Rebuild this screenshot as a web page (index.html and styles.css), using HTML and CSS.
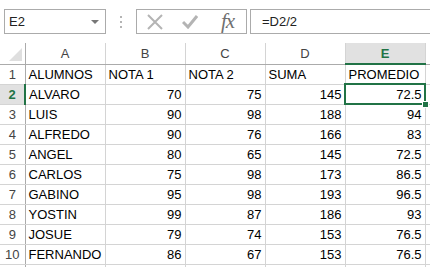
FILE: index.html
```html
<!DOCTYPE html>
<html>
    <head>
        <title>Hoja de cálculo</title>
        <link rel="stylesheet" href="styles.css">
    </head>
    <body>
        <div class="formula-bar">
            <div class="name-box">
                <span>E2</span>
                <span class="name-arrow"></span>
            </div>
            <div class="grip">
                <span></span><span></span><span></span>
            </div>
            <div class="fx-tools">
                <svg class="tool" width="18" height="16" viewBox="0 0 18 16">
                    <path d="M2 1 L16 15 M16 1 L2 15" stroke="#b4b4b4" stroke-width="2" fill="none"/>
                </svg>
                <svg class="tool" width="16" height="14" viewBox="0 0 16 14">
                    <path d="M1 7 L6 12 L15 1" stroke="#b4b4b4" stroke-width="3" fill="none"/>
                </svg>
                <span class="fx">fx</span>
            </div>
            <div class="formula-input">=D2/2</div>
        </div>
        <table class="sheet">
            <colgroup>
                <col class="c-head"><col class="c-cell"><col class="c-cell"><col class="c-cell"><col class="c-cell"><col class="c-cell"><col class="c-rest">
            </colgroup>
            <tr class="col-heads">
                <th class="corner"><span class="corner-tri"></span></th>
                <th>A</th><th>B</th><th>C</th><th>D</th><th class="sel">E</th><th class="rest"></th>
            </tr>
            <tr><th>1</th><td>ALUMNOS</td><td>NOTA 1</td><td>NOTA 2</td><td>SUMA</td><td>PROMEDIO</td><td></td></tr>
            <tr><th class="sel">2</th><td>ALVARO</td><td class="n">70</td><td class="n">75</td><td class="n">145</td><td class="n active">72.5<span class="handle"></span></td><td></td></tr>
            <tr><th>3</th><td>LUIS</td><td class="n">90</td><td class="n">98</td><td class="n">188</td><td class="n">94</td><td></td></tr>
            <tr><th>4</th><td>ALFREDO</td><td class="n">90</td><td class="n">76</td><td class="n">166</td><td class="n">83</td><td></td></tr>
            <tr><th>5</th><td>ANGEL</td><td class="n">80</td><td class="n">65</td><td class="n">145</td><td class="n">72.5</td><td></td></tr>
            <tr><th>6</th><td>CARLOS</td><td class="n">75</td><td class="n">98</td><td class="n">173</td><td class="n">86.5</td><td></td></tr>
            <tr><th>7</th><td>GABINO</td><td class="n">95</td><td class="n">98</td><td class="n">193</td><td class="n">96.5</td><td></td></tr>
            <tr><th>8</th><td>YOSTIN</td><td class="n">99</td><td class="n">87</td><td class="n">186</td><td class="n">93</td><td></td></tr>
            <tr><th>9</th><td>JOSUE</td><td class="n">79</td><td class="n">74</td><td class="n">153</td><td class="n">76.5</td><td></td></tr>
            <tr><th>10</th><td>FERNANDO</td><td class="n">86</td><td class="n">67</td><td class="n">153</td><td class="n">76.5</td><td></td></tr>
            <tr><th></th><td></td><td></td><td></td><td></td><td></td><td></td></tr>
        </table>
    </body>
</html>
```

FILE: styles.css
```css
body {
    margin: 0;
    padding: 0;
    background-color: #fff;
    font-family: "Liberation Sans", Arial, sans-serif;
    color: #000;
    overflow: hidden;
}
.formula-bar {
    display: flex;
    align-items: center;
    height: 25px;
    padding: 9px 0 9px 4px;
}
.name-box {
    display: flex;
    align-items: center;
    justify-content: space-between;
    padding: 0 6px 0 4px;
    box-sizing: border-box;
    width: 102px;
    height: 25px;
    border: 1px solid #ababab;
    font-size: 13px;
    color: #222;
}
.name-arrow {
    width: 0;
    height: 0;
    border-left: 4px solid transparent;
    border-right: 4px solid transparent;
    border-top: 4px solid #777;
}
.grip {
    width: 30px;
    display: flex;
    flex-direction: column;
    align-items: center;
    gap: 3px;
}
.grip span {
    width: 2px;
    height: 2px;
    background-color: #b4b4b4;
}
.fx-tools {
    width: 111px;
    height: 25px;
    box-sizing: border-box;
    border: 1px solid #ababab;
    display: flex;
    align-items: center;
    padding-left: 9px;
}
.tool {
    display: block;
}
.fx-tools svg:first-child {
    margin-right: 18px;
}
.fx-tools svg:nth-child(2) {
    margin-right: 23px;
}
.fx {
    font-family: "Liberation Serif", "Times New Roman", serif;
    font-style: italic;
    font-size: 21px;
    color: #707070;
    line-height: 1;
    letter-spacing: -1px;
}
.formula-input {
    flex: 1;
    height: 25px;
    box-sizing: border-box;
    border: 1px solid #ababab;
    border-right: none;
    margin-left: 3px;
    padding-left: 11px;
    font-size: 13px;
    line-height: 23px;
    color: #222;
}
.sheet {
    border-collapse: collapse;
    table-layout: fixed;
    width: 445px;
    font-size: 13px;
}
.c-head {
    width: 25px;
}
.c-cell {
    width: 80px;
}
.c-rest {
    width: 20px;
}
.sheet th, .sheet td {
    height: 20px;
    padding: 0 3px;
    box-sizing: border-box;
    border: 1px solid #d4d4d4;
    white-space: nowrap;
    overflow: visible;
}
.sheet th {
    font-weight: normal;
    color: #444;
    text-align: center;
    padding: 0;
    border-color: #d4d4d4 #ababab #d4d4d4 #d4d4d4;
}
.sheet td {
    text-align: left;
}
.sheet td.n {
    text-align: right;
}
.col-heads th {
    height: 21px;
    border-top: none;
    border-bottom: 1px solid #ababab;
    border-right-color: #d4d4d4;
}
.col-heads th.corner {
    position: relative;
    border-left: none;
    border-right-color: #ababab;
}
.corner-tri {
    position: absolute;
    right: 3px;
    bottom: 3px;
    width: 0;
    height: 0;
    border-left: 13px solid transparent;
    border-bottom: 13px solid #dfdfdf;
}
.sheet tr th:first-child {
    border-left: none;
}
.sheet th.sel {
    background-color: #e1e1e1;
    color: #217346;
    font-weight: bold;
}
.col-heads th.sel {
    border-bottom: 2px solid #217346;
}
.sheet tr th.sel:first-child {
    color: #217346;
    border-right: 2px solid #217346;
}
.sheet td.active {
    position: relative;
    outline: 2px solid #217346;
    outline-offset: -1px;
}
.handle {
    position: absolute;
    right: -4px;
    bottom: -4px;
    width: 5px;
    height: 5px;
    background-color: #217346;
    border: 1px solid #fff;
}
```
